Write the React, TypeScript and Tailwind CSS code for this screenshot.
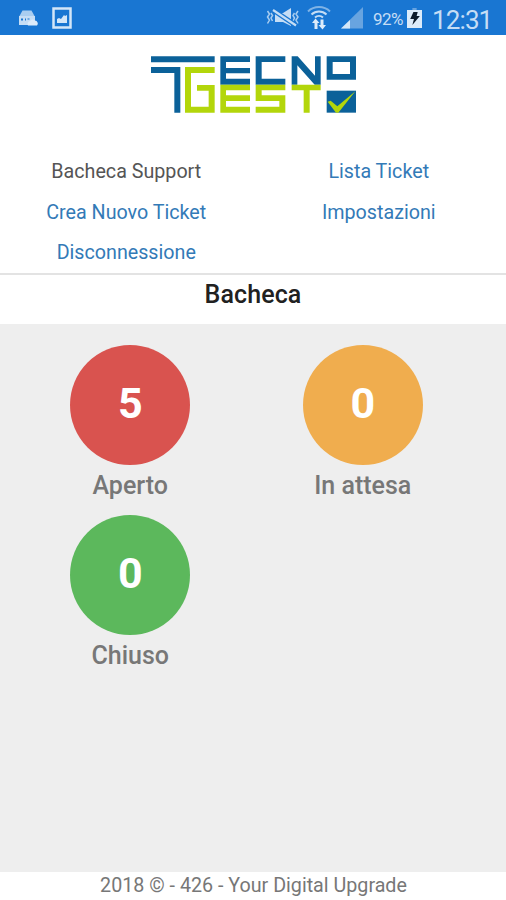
const NAV = [
  { label: "Bacheca Support", active: true },
  { label: "Lista Ticket", active: false },
  { label: "Crea Nuovo Ticket", active: false },
  { label: "Impostazioni", active: false },
  { label: "Disconnessione", active: false },
];

const STATS = [
  { label: "Aperto", count: 5, color: "bg-[#d9534f]" },
  { label: "In attesa", count: 0, color: "bg-[#f0ad4e]" },
  { label: "Chiuso", count: 0, color: "bg-[#5cb85c]" },
];

function StatusBar() {
  return (
    <div className="flex h-[35px] shrink-0 items-center bg-[#1976d2] pl-[18px] text-[#c5ddf5]">
      <svg width="20" height="16" viewBox="0 0 20 16" className="mt-px">
        <path d="M4.500 0.500h9l3 5.500H1.500z" fill="#a9cdf0" />
        <path d="M1 6h16v9H1z" fill="#c5ddf5" />
        <path d="M3 8.500h2v2H3zM7 8.500h1v2H7zM9.500 8.500h2v1h-2z" fill="#1976d2" />
        <path d="M10 15.500a3 3 0 0 1 2-4.500 3.200 3.200 0 0 1 5-.5 3 3 0 0 1 2 5z" fill="#dcebfa" />
      </svg>
      <svg width="20" height="22" viewBox="0 0 20 22" className="ml-[14px] mt-px">
        <path d="M1.500 1.500h17v19h-17z" fill="none" stroke="#d3e6f8" strokeWidth="2.500" />
        <path d="M5 16v-4l2-1 2 1 3-4 1 1 2-1v8z" fill="#d3e6f8" />
      </svg>
      <svg width="34" height="22" viewBox="0 0 34 22" className="ml-[194px]">
        <g fill="none" stroke="#a9cdf0" strokeWidth="1.500">
          <path d="M1.500 4l2 3-2 3 2 3-2 3.500M5 6l1.500 2.500L5 11l1.500 3M32 4l-2 3 2 3-2 3 2 3.500M28.500 6L27 8.500l1.500 2.500L27 14" />
        </g>
        <path d="M9 6h8l8-5v18l-8-4H9z" fill="#c5ddf5" />
        <path d="M7 3L30 18.500" stroke="#1976d2" strokeWidth="5" />
        <path d="M7 3L30 18.500" stroke="#c5ddf5" strokeWidth="2.200" />
      </svg>
      <svg width="24" height="26" viewBox="0 0 24 26" className="ml-[7px] mt-px">
        <g fill="none" stroke="#c5ddf5" strokeWidth="2">
          <path d="M1 6.500a16 16 0 0 1 22 0" stroke="#7fb3e6" />
          <path d="M4.500 9.500a11 11 0 0 1 15 0" />
          <path d="M8 12.500a6 6 0 0 1 8 0" />
        </g>
        <path d="M8.500 13.500l4 4.500h-2v6H7.500v-6H5zM15.500 24.500l-4-4.500h2v-5.500h3V20h2.500z" fill="#dcebfa" />
      </svg>
      <svg width="24" height="22" viewBox="0 0 24 22" className="ml-[9px] mt-px">
        <path d="M1 21.500L23 0v21.500z" fill="#68a4e0" />
        <path d="M1 21.500L10 13v8.500z" fill="#d3e6f8" />
      </svg>
      <span className="ml-[9px] mt-[4px] text-[17px] tracking-[-0.500px]">92%</span>
      <svg width="15" height="20" viewBox="0 0 14 20" preserveAspectRatio="none" className="ml-[4px] mt-[1px]">
        <path d="M5 0h4v2H5z" fill="#68a4e0" />
        <path d="M0 2h14v18H0z" fill="#dcebfa" />
        <path d="M6 4l4 0-1 4h3l-7 9 1.500-6H3z" fill="#0b1a2b" />
      </svg>
      <span className="ml-[10px] mt-[4px] text-[26px] leading-none tracking-[-0.900px]">12:31</span>
    </div>
  );
}

function Logo() {
  return (
    <svg width="206" height="57" viewBox="33 31 618 171" className="ml-[151px] mt-[21px] shrink-0">
      <g fill="#0b6199">
        <path d="M33 32h191v18H33z" />
        <path d="M33 64h88v137h-18V82H33z" />
        <path d="M241 32h89v17h-72v18h72v16h-72v16h72v18h-89z" />
        <path d="M347 32h89v17h-71v50h71v18h-89z" />
        <path d="M455 32h18l52 58V32h17v85h-18l-52-58v58h-17z" />
        <path d="M560 32h88v70h-88zM578 49v36h52V49z" fillRule="evenodd" />
        <path d="M560 135h88v66h-88z" />
      </g>
      <g fill="#b3d60b">
        <path d="M135 64h89v18h-71v101h53v-48h-35v-17h53v83h-89z" />
        <path d="M241 117h89v17h-72v15h72v17h-72v17h72v18h-89z" />
        <path d="M347 117h89v17h-71v15h71v52h-89v-18h71v-17h-71z" />
        <path d="M455 117h87v17h-33v67h-18v-67h-36z" />
        <path d="M563 168l9-3 20 17 54-45-51 64h-7z" />
      </g>
    </svg>
  );
}

export default function App() {
  return (
    <div className="flex h-[900px] w-[506px] flex-col overflow-hidden bg-white font-[Roboto,sans-serif]">
      <StatusBar />
      <header className="flex h-[240px] shrink-0 flex-col border-b-2 border-[#e3e3e3]">
        <Logo />
        <nav className="mt-[39px] grid w-[505px] grid-cols-2 text-center text-[19.700px] leading-[40.500px]">
          {NAV.map((item) => (
            <a key={item.label} className={item.active ? "text-[#555555]" : "text-[#337ab7]"}>
              {item.label}
            </a>
          ))}
        </nav>
      </header>
      <h1 className="h-[49px] shrink-0 pt-[3px] text-center text-[25px] font-medium leading-[34px] tracking-[0.100px] text-[#212121]">
        Bacheca
      </h1>
      <main className="flex-1 bg-[#eeeeee] pl-[14px] pt-[21px]">
        <div className="grid w-[465px] grid-cols-2">
          {STATS.map((stat) => (
            <div key={stat.label} className="flex h-[170px] flex-col items-center">
              <div
                className={`flex h-[120px] w-[120px] items-center justify-center rounded-full pb-[3px] text-[43px] font-bold text-white ${stat.color}`}
              >
                {stat.count}
              </div>
              <div className="text-[25px] font-medium leading-[42px] text-[#777777]">{stat.label}</div>
            </div>
          ))}
        </div>
      </main>
      <footer className="h-[28px] shrink-0 pl-px text-center text-[19.700px] leading-[28px] text-[#777777]">
        2018 © - 426 - Your Digital Upgrade
      </footer>
    </div>
  );
}
